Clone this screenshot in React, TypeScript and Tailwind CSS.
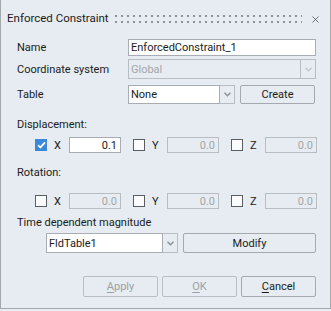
import { X } from 'lucide-react';

const Chevron = ({ color = '#8c9094' }: { color?: string }) => (
    <svg width="7" height="5" viewBox="0 0 7 5">
        <path d="M0.5 0.8 L3.5 3.8 L6.5 0.8" fill="none" stroke={color} strokeWidth="1.4" />
    </svg>
);

const Combo = ({
    value,
    disabled,
    className,
}: {
    value: string;
    disabled?: boolean;
    className: string;
}) => (
    <div className={`flex ${className}`}>
        <div
            className={`flex flex-1 items-center border pl-[2px] ${
                disabled
                    ? 'border-[#b8bdc2] text-[#a3a6a9]'
                    : 'border-[#a7adb3] bg-white text-[#1b1b1b]'
            }`}
        >
            {value}
        </div>
        <div className="flex w-[15px] items-center justify-center border border-l-0 border-[#b8bdc2]">
            <Chevron color={disabled ? '#c2c6ca' : '#8c9094'} />
        </div>
    </div>
);

const Button = ({
    children,
    disabled,
    className = 'w-[75px]',
}: {
    children: React.ReactNode;
    disabled?: boolean;
    className?: string;
}) => (
    <div
        className={`flex h-full items-center justify-center rounded-[2px] border ${
            disabled ? 'border-[#b9bec3] text-[#9da1a5]' : 'border-[#a3a9ae] text-[#1b1b1b]'
        } ${className}`}
    >
        {children}
    </div>
);

const Check = ({ checked }: { checked?: boolean }) =>
    checked ? (
        <div className="flex h-[12px] w-[12px] items-center justify-center bg-[#3b87d9]">
            <svg width="9" height="8" viewBox="0 0 9 8">
                <path d="M1 4.2 L3.4 6.4 L8 1.4" fill="none" stroke="white" strokeWidth="1.8" />
            </svg>
        </div>
    ) : (
        <div className="h-[12px] w-[12px] border border-[#5b5e61] bg-[#fbfcfd]" />
    );

const AxisRow = ({ values }: { values: { checked?: boolean; value: string }[] }) => (
    <div className="flex h-[16px] pl-[18px]">
        {['X', 'Y', 'Z'].map((axis, i) => {
            const v = values[i];
            const enabled = v.checked;
            return (
                <div key={axis} className={`flex items-center ${i > 0 ? 'ml-[12px]' : ''}`}>
                    <Check checked={v.checked} />
                    <span className="ml-[7px] w-[15px] text-[#1b1b1b]">{axis}</span>
                    <div
                        className={`flex h-[16px] w-[52px] items-center justify-end border pr-[3px] ${
                            enabled
                                ? 'border-[#a7adb3] bg-white text-[#1b1b1b]'
                                : 'border-[#b8bdc2] text-[#a3a6a9]'
                        }`}
                    >
                        {v.value}
                    </div>
                </div>
            );
        })}
    </div>
);

export default function App() {
    return (
        <div className="h-[311px] w-[331px] bg-[#e6ecf1] font-['Roboto',sans-serif] text-[11px] leading-none text-[#1b1b1b]">
            <div className="flex h-[309px] flex-col border border-t-0 border-[#a3a8ad]">
                {/* Title bar */}
                <div className="flex h-[38px] items-center pl-[6px] pr-[9px]">
                    <span className="w-[94px] whitespace-nowrap text-[11.5px]">Enforced Constraint</span>
                    <svg className="ml-[14px] mr-[8px] flex-1" height="8">
                        <defs>
                            <pattern id="dots" width="6" height="6" patternUnits="userSpaceOnUse">
                                <rect x="0" y="0" width="2" height="2" fill="#8e9195" />
                            </pattern>
                        </defs>
                        <rect x="0" y="0" width="100%" height="8" fill="url(#dots)" />
                    </svg>
                    <X size={11} strokeWidth={1.5} color="#3a3a3a" />
                </div>

                <div className="flex flex-col pl-[16px] pr-[14px]">
                    {/* Name */}
                    <div className="mt-[1px] flex h-[17px] items-center">
                        <span className="w-[111px]">Name</span>
                        <div className="flex h-full flex-1 items-center border border-[#a7adb3] bg-white pl-[2px]">
                            EnforcedConstraint_1
                        </div>
                    </div>

                    {/* Coordinate system */}
                    <div className="mt-[3px] flex h-[20px] items-center">
                        <span className="w-[111px]">Coordinate system</span>
                        <Combo value="Global" disabled className="h-full flex-1" />
                    </div>

                    {/* Table */}
                    <div className="mt-[6px] flex h-[19px] items-center">
                        <span className="w-[111px]">Table</span>
                        <Combo value="None" className="h-full w-[107px]" />
                        <div className="ml-[5px] h-full">
                            <Button>Create</Button>
                        </div>
                    </div>

                    <div className="mt-[13px] flex h-[14px] items-center">Displacement:</div>
                    <div className="mt-[6px]">
                        <AxisRow
                            values={[
                                { checked: true, value: '0.1' },
                                { value: '0.0' },
                                { value: '0.0' },
                            ]}
                        />
                    </div>

                    <div className="mt-[12px] flex h-[14px] items-center">Rotation:</div>
                    <div className="mt-[14px]">
                        <AxisRow values={[{ value: '0.0' }, { value: '0.0' }, { value: '0.0' }]} />
                    </div>

                    <div className="mt-[6px] flex h-[14px] items-center">Time dependent magnitude</div>
                    <div className="mt-[4px] flex h-[20px] pl-[29px]">
                        <Combo value="FldTable1" className="h-full w-[132px]" />
                        <div className="ml-[5px] h-full flex-1">
                            <Button className="w-full">Modify</Button>
                        </div>
                    </div>

                    {/* Footer buttons */}
                    <div className="mt-[23px] flex h-[21px] justify-end gap-[4px]">
                        <Button disabled>
                            <span className="underline underline-offset-2">A</span>pply
                        </Button>
                        <Button disabled>
                            <span className="underline underline-offset-2">O</span>K
                        </Button>
                        <Button>
                            <span className="underline underline-offset-2">C</span>ancel
                        </Button>
                    </div>
                </div>
            </div>
        </div>
    );
}
